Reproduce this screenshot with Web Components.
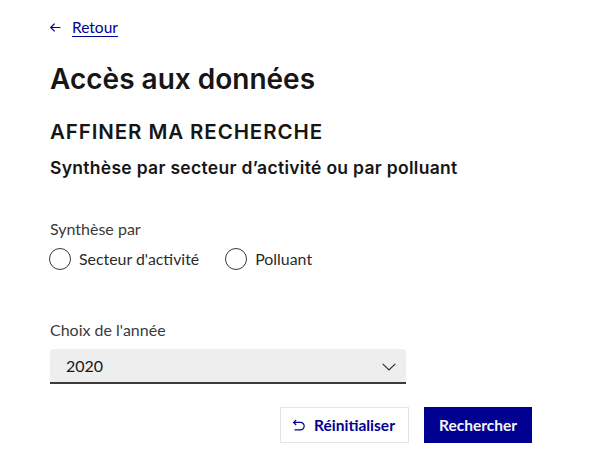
<!DOCTYPE html>
<html lang="fr"><head><meta charset="utf-8"><title>Accès aux données</title>
<style>
html,body{margin:0;padding:0;background:#fff}
body{font-family:"Lato","Noto Sans",sans-serif;color:#161616}
</style></head><body>
<search-page>
  <back-link slot="back">Retour</back-link>
  <span slot="title">Accès aux données</span>
  <span slot="sub">Affiner ma recherche</span>
  <span slot="lead">Synthèse par secteur d’activité ou par polluant</span>
  <radio-group slot="radios" label="Synthèse par">
    <radio-item>Secteur d'activité</radio-item>
    <radio-item>Polluant</radio-item>
  </radio-group>
  <select-field slot="select" label="Choix de l'année" value="2020"></select-field>
  <action-button slot="actions" kind="secondary">Réinitialiser</action-button>
  <action-button slot="actions" kind="primary">Rechercher</action-button>
</search-page>
<script>
function def(name,html,init){customElements.define(name,class extends HTMLElement{
  constructor(){super();this.attachShadow({mode:'open'}).innerHTML=html;}
  connectedCallback(){init&&init(this,this.shadowRoot);}
});}
def('search-page',`<style>
:host{display:block;width:590px;height:463px;box-sizing:border-box;padding:18px 58px 0 50px;overflow:hidden}
.back{display:block;height:20px}
h1{margin:21px 0 0;font-family:Inter,"Lato",sans-serif;font-size:28px;line-height:40px;font-weight:600;color:#161616}
h2{margin:19px 0 0;font-family:Inter,"Lato",sans-serif;font-size:20.5px;line-height:28px;font-weight:600;text-transform:uppercase;letter-spacing:.9px}
p{margin:10px 0 0;font-family:Inter,"Lato",sans-serif;font-size:17.5px;line-height:24px;font-weight:600;letter-spacing:.3px}
.radios{display:block;margin-top:38px}
.select{display:block;margin-top:48px}
.actions{display:flex;justify-content:flex-end;gap:15px;margin-top:23px}
</style>
<div class="back"><slot name="back"></slot></div>
<h1><slot name="title"></slot></h1>
<h2><slot name="sub"></slot></h2>
<p><slot name="lead"></slot></p>
<div class="radios"><slot name="radios"></slot></div>
<div class="select"><slot name="select"></slot></div>
<div class="actions"><slot name="actions"></slot></div>`);
def('back-link',`<style>
:host{display:inline-flex;align-items:center;gap:10px;color:#000091;font-size:15.5px;line-height:18px}
svg{width:13px;height:13px;flex:none;margin-left:-1px}
a{color:inherit;text-decoration:none;border-bottom:1px solid #000091;padding-bottom:0;line-height:18px}
</style>
<svg viewBox="0 0 12 12" fill="none" stroke="currentColor" stroke-width="1.1"><path d="M10.5 6H1.8M5.2 2.4 1.6 6 5.2 9.6"/></svg>
<a href="#"><slot></slot></a>`);
def('radio-group',`<style>
:host{display:block;font-size:16px;color:#3a3a3a}
.l{line-height:22px}
.r{display:flex;gap:27px;margin-top:7px}
</style><div class="l"></div><div class="r"><slot></slot></div>`,(h,s)=>{s.querySelector('.l').textContent=h.getAttribute('label')});
def('radio-item',`<style>
:host{display:inline-flex;align-items:center;gap:8px;font-size:15.9px;line-height:24px;color:#2a2a2a;margin-left:-1px}
i{display:block;box-sizing:border-box;width:22px;height:22px;border:1.5px solid #3a3a3a;border-radius:50%}
</style><i></i><span><slot></slot></span>`);
def('select-field',`<style>
:host{display:block;width:356px;font-size:16px;color:#3a3a3a}
.l{line-height:22px}
.b{display:flex;align-items:center;justify-content:space-between;box-sizing:border-box;height:35px;margin-top:8px;padding:0 10px 0 16px;background:#eee;border-bottom:2px solid #3a3a3a;border-radius:4px 4px 0 0;color:#161616;font-size:16px}
svg{width:14px;height:8px;margin-top:3px}
</style><div class="l"></div><div class="b"><span class="v"></span><svg viewBox="0 0 14 8" fill="none" stroke="#2a2a2a" stroke-width="1.1"><path d="M.7.8 7 7 13.3.8"/></svg></div>`,(h,s)=>{s.querySelector('.l').textContent=h.getAttribute('label');s.querySelector('.v').textContent=h.getAttribute('value')});
def('action-button',`<style>
:host{display:inline-flex;align-items:center;justify-content:center;box-sizing:border-box;height:36px;font-size:15.5px;font-weight:700}
:host([kind=primary]){background:#000091;color:#f5f5fe;width:108px}
:host([kind=secondary]){background:#fff;color:#000091;width:129px;border:1px solid #e5e5e5;gap:8px;padding-right:2px}
svg{width:14px;height:12px;display:none}
:host([kind=secondary]) svg{display:block}
</style><svg viewBox="0 0 14 12" fill="none" stroke="#000091" stroke-width="1.2"><path d="M4.2.8 1.6 3.4 4.2 6M1.8 3.4H8.5a3.7 3.7 0 0 1 0 7.4H2.5"/></svg><span><slot></slot></span>`);
</script>
</body></html>
